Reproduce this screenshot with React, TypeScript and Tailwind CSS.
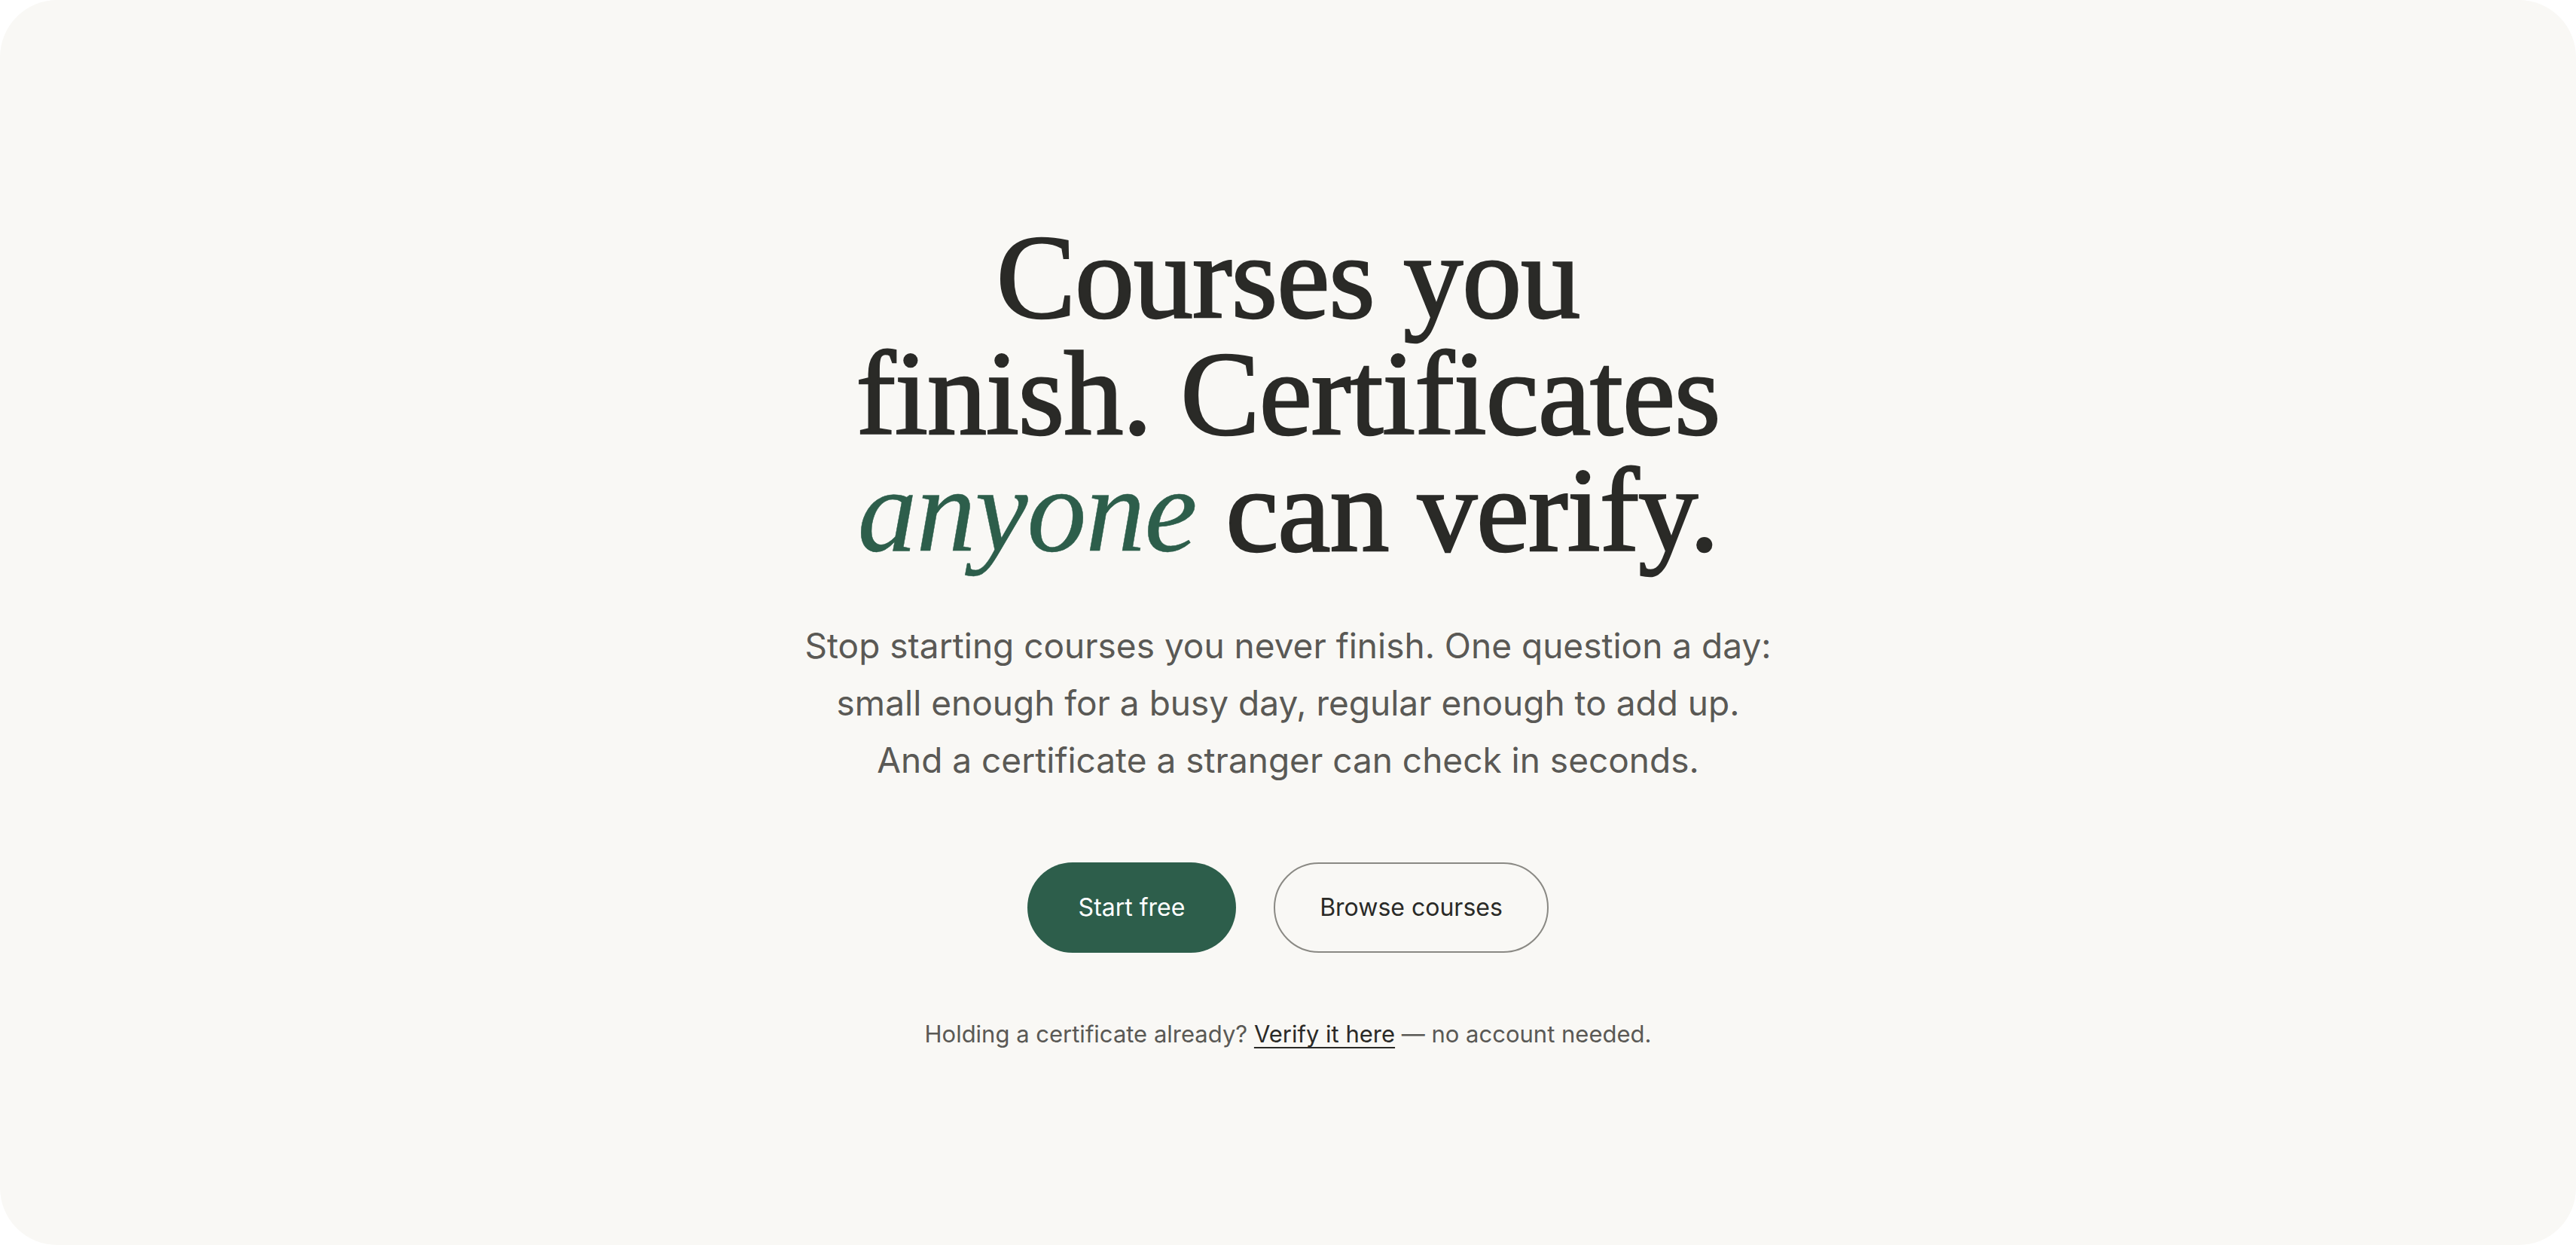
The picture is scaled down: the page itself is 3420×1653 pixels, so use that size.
import React from "react";

export default function App() {
  return (
    <div className="w-[3420px] h-[1653px] bg-white">
      <div className="w-full h-full bg-[#f9f8f5] rounded-[76px] flex flex-col items-center pt-[290px]">
        <h1 className="text-center text-[158px] leading-[155px] text-[#2a2a27] font-['Liberation_Serif',serif] [-webkit-text-stroke:2.5px_#2a2a27] tracking-[-1px]">
          Courses you
          <br />
          finish. Certificates
          <br />
          <span className="italic text-[#2d5e4b] [-webkit-text-stroke:0.5px_#2d5e4b]">anyone</span> can verify.
        </h1>
        <p className="mt-[64px] text-center text-[46px] leading-[76px] text-[#5a5955] font-['Inter',sans-serif]">
          Stop starting courses you never finish. One question a day:
          <br />
          small enough for a busy day, regular enough to add up.
          <br />
          And a certificate a stranger can check in seconds.
        </p>
        <div className="mt-[98px] flex gap-[50px] font-['Inter',sans-serif]">
          <button className="h-[120px] w-[277px] rounded-full bg-[#2d5e4b] text-white text-[32px]">
            Start free
          </button>
          <button className="h-[120px] w-[365px] rounded-full border-2 border-[#8a8984] text-[#2a2a27] text-[32px]">
            Browse courses
          </button>
        </div>
        <p className="mt-[85px] text-[31px] leading-[45px] text-[#5a5955] font-['Inter',sans-serif]">
          Holding a certificate already?{" "}
          <a className="text-[#2a2a27] underline decoration-2 underline-offset-[6px]">Verify it here</a> — no account needed.
        </p>
      </div>
    </div>
  );
}
